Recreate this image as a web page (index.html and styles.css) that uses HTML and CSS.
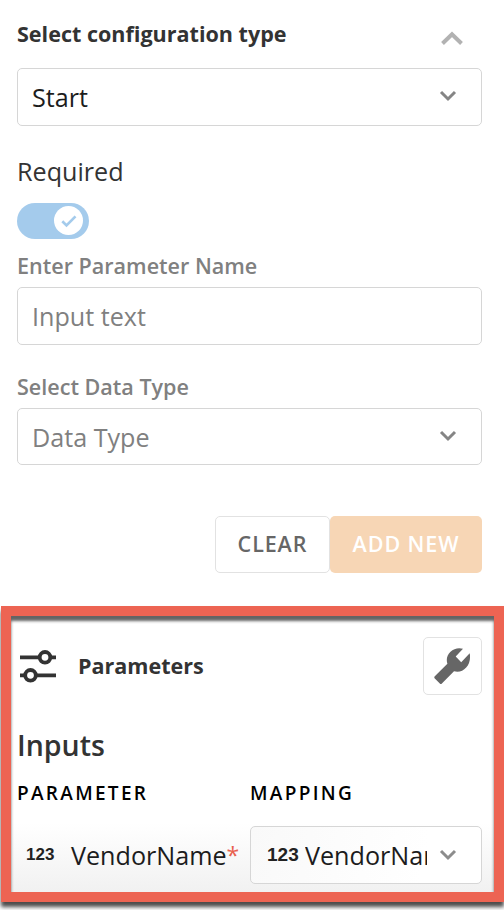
FILE: index.html
```html
<!DOCTYPE html>
<html lang="en">
<head>
<meta charset="utf-8">
<title>Configuration</title>
<link rel="stylesheet" href="styles.css">
</head>
<body>
<form class="config">
  <header class="config-head">
    <h2 class="title">Select configuration type</h2>
    <svg class="collapse" width="24" height="18" viewBox="0 0 24 18"><path d="M2.500 14.500 12 5.200l9.500 9.300" fill="none" stroke="#b2b2b2" stroke-width="4"/></svg>
  </header>
  <div class="field value"><span>Start</span><svg class="chevron" width="18" height="12" viewBox="0 0 18 12"><path d="m2 2 7 7 7-7" fill="none" stroke="#858585" stroke-width="3"/></svg></div>
  <div class="required">Required</div>
  <div class="toggle"><span class="knob"><svg width="18" height="16" viewBox="0 0 18 16"><path d="m2.300 8.200 4.200 4.200 9-9" fill="none" stroke="#a4cbec" stroke-width="2.700"/></svg></span></div>
  <div class="label name-label">Enter Parameter Name</div>
  <div class="field"><span>Input text</span></div>
  <div class="label type-label">Select Data Type</div>
  <div class="field short"><span>Data Type</span><svg class="chevron" width="18" height="12" viewBox="0 0 18 12"><path d="m2 2 7 7 7-7" fill="none" stroke="#858585" stroke-width="3"/></svg></div>
  <div class="actions">
    <div class="btn clear">CLEAR</div>
    <div class="btn add">ADD NEW</div>
  </div>
</form>
<section class="params">
  <header class="params-head">
    <svg width="38" height="34" viewBox="0 0 38 34" fill="none" stroke="#333" stroke-width="3.800"><path d="M1 8.300h19M31.500 8.300H37M1 26.300h5M16.500 26.300H37"/><circle cx="26" cy="8.300" r="5.300"/><circle cx="11.500" cy="26.300" r="5.300"/></svg>
    <h3 class="params-title">Parameters</h3>
    <div class="tool"><svg width="38" height="38" viewBox="0 0 38 38"><path d="M30 1.800C22-.8 13.800 5.500 13.800 13c0 1.300.2 2.500.6 3.700L1.800 29.300c-.7.700-.7 1.500 0 2.200l5 5c.7.700 1.400.7 2.100 0L21 24.200c9 2.700 18-6 15.700-18L28.200 15.200 22.700 9.500Z" fill="#666"/></svg></div>
  </header>
  <h3 class="inputs">Inputs</h3>
  <div class="grid heads"><span>PARAMETER</span><span>MAPPING</span></div>
  <div class="grid row">
    <div class="param"><b class="num">123</b><span>VendorName</span><i class="star">*</i></div>
    <div class="field mapping"><b class="num">123</b><span class="clip">VendorName</span><svg class="chevron" width="18" height="12" viewBox="0 0 18 12"><path d="m2 2 7 7 7-7" fill="none" stroke="#8c8c8c" stroke-width="3"/></svg></div>
  </div>
</section>
</body>
</html>
```
FILE: styles.css
```css
* { box-sizing: border-box; }
body {
  margin: 0;
  width: 504px;
  height: 910px;
  overflow: hidden;
  background: #fff;
  color: #333;
  font-family: "Open Sans", sans-serif;
  font-size: 25.150px;
}
h2, h3 { margin: 0; }
svg { display: block; flex: none; }
.config { height: 606px; padding: 0 22px 0 17px; }
.config-head { height: 68px; padding: 0 18px 0 0; display: flex; justify-content: space-between; }
.title { font-size: 21.550px; line-height: 30px; font-weight: 700; margin-top: 19px; }
.collapse { margin-top: 29px; }
.field {
  height: 58px;
  border: 1px solid #d6d6d6;
  border-radius: 5px;
  padding: 0 24px 0 14px;
  display: flex;
  align-items: center;
  justify-content: space-between;
  color: #808080;
  line-height: 34px;
}
.field .chevron { margin-top: -2px; }
.field.short { height: 57px; }
.value { color: #1c1c1c; }
.required { margin-top: 28px; height: 49px; line-height: 34px; }
.toggle { width: 72px; height: 36px; border-radius: 18px; background: #a4cbec; padding: 3px 6px; display: flex; justify-content: flex-end; }
.knob { width: 29px; height: 29px; border-radius: 50%; background: #fff; display: flex; align-items: center; justify-content: center; }
.label { font-size: 21.550px; font-weight: 600; line-height: 30px; color: #808080; }
.name-label { margin-top: 12px; height: 36px; }
.type-label { margin-top: 27px; height: 36px; }
.actions { margin-top: 51px; display: flex; justify-content: flex-end; }
.btn { height: 57px; border-radius: 5px; font-size: 21.500px; font-weight: 600; line-height: 56px; text-align: center; letter-spacing: .9px; }
.clear { width: 115px; border: 1px solid #e2e2e2; line-height: 54px; color: #666; }
.add { width: 152px; background: #f7d6b5; color: #fff; }
.params {
  position: relative;
  height: 296px;
  margin-left: 1px;
  padding: 0 12px 0 6px;
  border: 10px solid #ed6453;
  background: linear-gradient(#fff 75%, #f1f1f1);
  box-shadow: inset 0 5px 3px #646464, 0 5px 4px #4c4c4c;
}
.params-head { padding-top: 21px; display: flex; align-items: flex-start; }
.params-head > svg { margin: 12px 0 0 2px; }
.params-title { font-size: 21.550px; line-height: 30px; margin: 14px 0 0 21px; }
.tool { width: 59px; height: 58px; border: 1px solid #e2e2e2; border-radius: 5px; margin-left: auto; padding: 9px 0 0 9px; }
.inputs { font-size: 28.500px; line-height: 38px; font-weight: 600; margin-top: 31px; }
.grid { display: grid; grid-template-columns: 233px 232px; }
.heads { height: 62px; padding-top: 15px; font-size: 19px; line-height: 28px; font-weight: 600; letter-spacing: 2.300px; color: #000; }
.param { display: flex; align-items: center; height: 58px; color: #1c1c1c; padding-left: 9px; }
.num { font: 700 17px/20px "Liberation Sans", sans-serif; width: 28px; color: #222; margin-right: 17px; }
.star { color: #e8604f; font-style: normal; font-size: 23px; }
.mapping { background: linear-gradient(100deg, #f9f9f9, #fff 75%); padding-left: 16px; color: #1c1c1c; }
.mapping .num { font-size: 19px; width: 32px; margin-right: 6px; }
.mapping .chevron { margin-top: 0; }
.clip { width: 122px; overflow: hidden; margin-right: auto; }
```
